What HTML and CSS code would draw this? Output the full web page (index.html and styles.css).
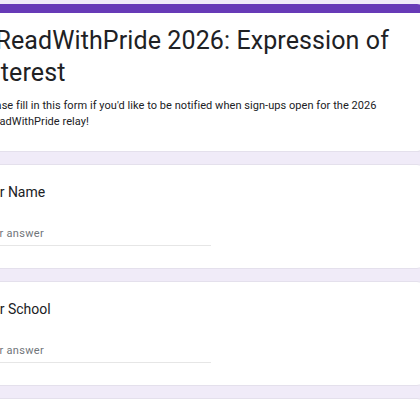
FILE: index.html
```html
<!DOCTYPE html>
<html lang="en">
<head>
<meta charset="utf-8">
<title>#ReadWithPride 2026: Expression of Interest</title>
<link rel="stylesheet" href="styles.css">
</head>
<body>
<main class="form">
  <section class="card header-card">
    <h1 class="form-title">#ReadWithPride 2026: Expression of Interest</h1>
    <p class="form-desc">Please fill in this form if you'd like to be notified when sign-ups open for the 2026 #ReadWithPride relay!</p>
  </section>
  <section class="card question">
    <div class="q-title">Your Name</div>
    <div class="q-input"><span class="placeholder">Your answer</span></div>
  </section>
  <section class="card question">
    <div class="q-title">Your School</div>
    <div class="q-input"><span class="placeholder">Your answer</span></div>
  </section>
  <section class="card question">
    <div class="q-title">Your Email</div>
    <div class="q-input"><span class="placeholder">Your answer</span></div>
  </section>
</main>
</body>
</html>
```
FILE: styles.css
```css
html, body {
  margin: 0;
  padding: 0;
}
body {
  background: #f0ebf8;
  font-family: Roboto, "Liberation Sans", Arial, sans-serif;
  color: #202124;
  overflow: hidden;
  height: 420px;
}
.form {
  display: flex;
  flex-direction: column;
  gap: 12px;
  width: 470px;
  margin-left: -45px;
  padding-top: 4px;
}
.card {
  background: #fff;
  border: 1px solid #e4e0ec;
  border-radius: 8px;
  padding: 0 24px;
}
.header-card {
  border-top: 9px solid #673ab7;
  padding-top: 12px;
  padding-bottom: 22px;
  height: 104px;
}
.form-title {
  margin: 0;
  font-size: 25px;
  line-height: 32px;
  font-weight: 400;
  letter-spacing: 0.1px;
  color: #202124;
}
.form-desc {
  margin: 9px 0 0;
  font-size: 11px;
  line-height: 16px;
  letter-spacing: 0.05px;
  color: #202124;
}
.question {
  padding-top: 17px;
  padding-bottom: 22px;
}
.q-title {
  margin-left: -4px;
  font-size: 14px;
  line-height: 20px;
  color: #202124;
}
.q-input {
  margin-top: 24px;
  width: 231px;
  padding-bottom: 3px;
  border-bottom: 1px solid #e6e6e6;
}
.placeholder {
  display: block;
  font-size: 11px;
  line-height: 16px;
  color: #70757a;
  letter-spacing: 0.3px;
}
```
